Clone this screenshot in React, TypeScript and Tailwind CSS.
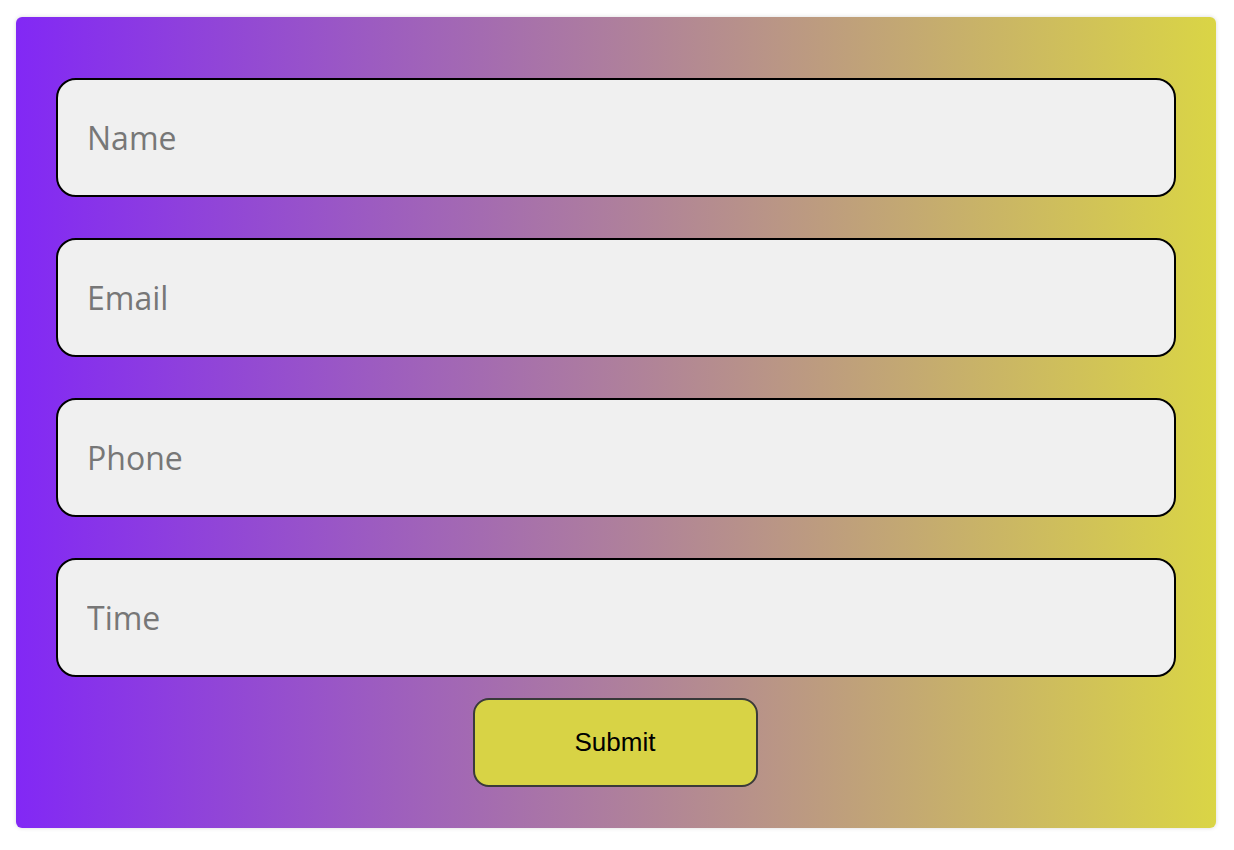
const fields = ["Name", "Email", "Phone", "Time"];

export default function App() {
  return (
    <div className="min-h-screen bg-white px-4 pt-[17px]">
      <form
        className="flex w-[1200px] flex-col rounded-md bg-[linear-gradient(to_right,#8228f5,#dad545)] px-10 pt-[61px] pb-[41px] shadow-[0_0_4px_rgba(0,0,0,0.15)]"
        onSubmit={(e) => e.preventDefault()}
      >
        <div className="flex flex-col gap-[41px]">
          {fields.map((f) => (
            <input
              key={f}
              placeholder={f}
              className="h-[119px] w-full rounded-[20px] border-2 border-black bg-[#f0f0f0] px-[29px] text-[32px] text-black outline-none placeholder:text-[#777777]"
              style={{ fontFamily: '"Open Sans", sans-serif' }}
            />
          ))}
        </div>
        <button
          type="submit"
          className="mx-auto mt-[21px] h-[89px] w-[285px] -translate-x-px rounded-[16px] border-2 border-[#3a3a3a] bg-[#d8d345] text-[26px] text-black"
          style={{ fontFamily: '"Liberation Sans", Arial, sans-serif' }}
        >
          Submit
        </button>
      </form>
    </div>
  );
}
